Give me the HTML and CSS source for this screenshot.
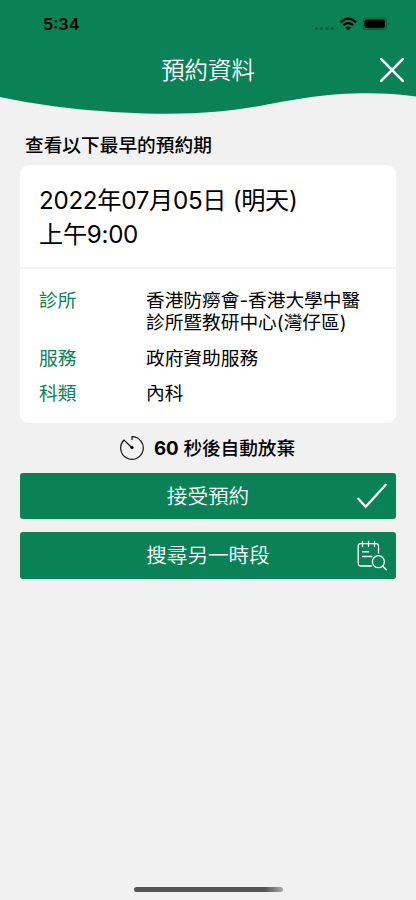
FILE: index.html
```html
<!DOCTYPE html>
<html lang="zh-Hant">
<head>
<meta charset="utf-8">
<meta name="viewport" content="width=device-width, initial-scale=1">
<title>預約資料</title>
<link rel="stylesheet" href="styles.css">
</head>
<body>
<div class="screen">
  <header class="header">
    <svg class="wave" viewBox="0 0 416 116" aria-hidden="true"><path d="M0 0H416V96.500C400 94 385 93.300 368 93.300C325 93.300 295 99.500 262 105.500C235 110.500 205 113.800 168 113.800C110 113.800 45 107 0 97Z"/></svg>
    <div class="status">
      <span class="clock">5:34</span>
      <svg class="indicators" width="76" height="16" viewBox="0 0 76 16" aria-hidden="true">
        <g fill="#085c3c"><circle cx="2.500" cy="12.300" r="1.600"/><circle cx="7.700" cy="12.300" r="1.600"/><circle cx="12.900" cy="12.300" r="1.600"/><circle cx="18.200" cy="12.300" r="1.600"/></g>
        <g fill="none" stroke="#000" stroke-width="2.300"><path d="M26.600 6.300Q34.300 -1 42 6.300"/><path d="M29.400 9.200Q34.300 4.800 39.200 9.200"/></g>
        <path d="M31.500 11.500Q34.300 9.300 37.100 11.500L34.300 14.200Z"/>
        <rect x="49" y="1.700" width="23.500" height="12" rx="3.500" fill="none" stroke="#075c3b"/>
        <rect x="50.500" y="3.200" width="20.500" height="9" rx="2.200"/>
        <path d="M74 6Q75.800 7.700 74 9.400Z" fill="#075c3b"/>
      </svg>
    </div>
    <div class="titlebar">
      <h1>預約資料</h1>
      <svg class="close" width="26" height="26" viewBox="0 0 26 26" role="button" aria-label="關閉"><path d="M2.200 2.200L23.800 23.800M23.800 2.200L2.200 23.800"/></svg>
    </div>
  </header>
  <main class="content">
    <h2>查看以下最早的預約期</h2>
    <section class="card">
      <div class="when">2022年07月05日 (明天)<br>上午9:00</div>
      <dl class="details">
        <dt>診所</dt><dd>香港防癆會-香港大學中醫<br>診所暨教研中心(灣仔區)</dd>
        <dt>服務</dt><dd>政府資助服務</dd>
        <dt>科類</dt><dd>內科</dd>
      </dl>
    </section>
    <div class="timer">
      <svg width="24" height="24" viewBox="0 0 24 24" aria-hidden="true"><path d="M12 4V.700A11.300 11.300 0 1 1 4 4L12 11.700"/><circle cx="12" cy="11.500" r="1.600"/></svg>
      <span><b>60</b> 秒後自動放棄</span>
    </div>
    <button class="action" type="button"><span>接受預約</span>
      <svg width="30" height="30" viewBox="0 0 30 30" aria-hidden="true"><path class="check" d="M1.300 17.800L8.700 25.700L28.700 3.800"/></svg>
    </button>
    <button class="action" type="button"><span>搜尋另一時段</span>
      <svg width="30" height="30" viewBox="0 0 30 30" aria-hidden="true"><g transform="translate(0 1)"><path class="thin" d="M14.500 25H4Q1.200 25 1.200 22V4.800Q1.200 2.600 3.500 2.600H19Q21.500 2.600 21.500 5V12M5.500 .300V5.500M11.500 .300V5.500M17.500 .300V5.500M5.500 10.800H11.700M5.500 15.500H14.800M25.600 25L29.300 28.800"/><circle class="thin" cx="21.400" cy="20.700" r="6"/></g></svg>
    </button>
  </main>
  <div class="home"></div>
</div>
</body>
</html>
```
FILE: styles.css
```css
* { box-sizing: border-box; }
body {
  margin: 0;
  background: #f1f1f1;
  color: #000;
  font-family: Inter, "Noto Sans CJK TC", sans-serif;
}
h1, h2, dl, dd { margin: 0; font-weight: 400; }
.screen { height: 900px; display: flex; flex-direction: column; overflow: hidden; }
.header { position: relative; height: 116px; color: #fff; }
.wave { position: absolute; inset: 0; width: 416px; height: 116px; fill: #0b8157; z-index: -1; }
.status {
  height: 47px;
  padding: 0 26px 0 43px;
  display: flex;
  justify-content: space-between;
  align-items: center;
  color: #000;
}
.clock { font-size: 16.200px; font-weight: 600; line-height: 20px; }
.indicators { overflow: visible; }
.titlebar {
  height: 46px;
  padding: 0 11px;
  display: grid;
  grid-template-columns: 26px 1fr 26px;
  grid-template-rows: 45px;
  align-items: center;
}
.titlebar h1 {
  grid-column: 2;
  padding-top: 2px;
  font-size: 23.400px;
  line-height: 43px;
  text-align: center;
  font-weight: 350;
}
.close { stroke: #fff; stroke-width: 2.600; stroke-linecap: round; }
.content { flex: 1; padding: 17px 20px 0; }
.content h2 {
  padding-left: 5px;
  height: 32px;
  font-size: 18.700px;
  line-height: 26px;
  font-weight: 500;
}
.card { height: 258px; background: #fff; border-radius: 9px; }
.when {
  height: 104px;
  padding: 19px 19px 0;
  border-bottom: 2px solid #f1f1f1;
  font-size: 24.200px;
  line-height: 34px;
  letter-spacing: -.300px;
  font-weight: 390;
}
.details {
  padding: 21px 19px 0;
  display: grid;
  grid-template-columns: 107px 1fr;
  row-gap: 13.500px;
  font-size: 18.700px;
  line-height: 22px;
  font-weight: 390;
  white-space: nowrap;
}
.details dt { color: #0b8157; }
.timer {
  height: 49.500px;
  display: flex;
  align-items: center;
  justify-content: center;
  gap: 10px;
  padding-right: 1px;
  font-size: 18.700px;
  letter-spacing: -.100px;
  font-weight: 500;
}
.timer span { line-height: 24px; padding-top: 2px; }
.timer b { font-weight: 650; }
.timer path { fill: none; stroke: #111; stroke-width: 1.200; }
.action {
  position: relative;
  display: flex;
  width: 100%;
  height: 46.500px;
  margin: 0 0 13px;
  padding: 0 9px;
  border: 0;
  border-radius: 3px;
  background: #0b8157;
  color: #fff;
  font: 350 20.600px/46px Inter, "Noto Sans CJK TC", sans-serif;
  align-items: center;
}
.action span { flex: 1; padding: 2px 0 0 30px; text-align: center; }
.action svg { fill: none; stroke: #fff; stroke-linecap: round; overflow: visible; }
.check { stroke-width: 2.400; }
.thin { stroke-width: 1.300; }
.home { width: 149px; height: 5px; margin: 0 auto 8px; border-radius: 3px; background: linear-gradient(90deg, #555 88%, #aaa); }
```
